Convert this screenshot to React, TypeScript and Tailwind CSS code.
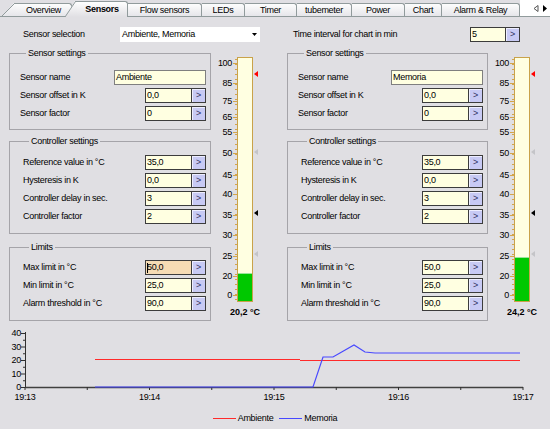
import React from "react";

// Ventana "Sensors" de la app de control: pestañas, dos sensores con termómetro y gráfico.

type TabDef = { label: string; w: string; slant?: boolean; active?: boolean };

const tabs: TabDef[] = [
  { label: "Overview", w: "w-[56px]", slant: true },
  { label: "Sensors", w: "w-[51px]", slant: true, active: true },
  { label: "Flow sensors", w: "w-[74px]" },
  { label: "LEDs", w: "w-[43px]" },
  { label: "Timer", w: "w-[52px]" },
  { label: "tubemeter", w: "w-[55px]" },
  { label: "Power", w: "w-[53px]" },
  { label: "Chart", w: "w-[37px]" },
  { label: "Alarm & Relay", w: "w-[78px]" },
];

function Tab({ label, w, slant, active }: TabDef) {
  const h = active ? 16 : 13;
  const sw = active ? 12 : 14;
  const id = `g-${label}`;
  return (
    <div className={`flex items-end ${active ? "z-10 -mb-px -ml-[7px] h-[16px]" : "h-[13px]"}`}>
      {slant && (
        <svg width={sw} height={h} className="block">
          <defs>
            <linearGradient id={id} x1="0" y1="0" x2="0" y2="1">
              <stop offset="0" stopColor={active ? "#ffffff" : "#fdfdfd"} />
              <stop offset="1" stopColor={active ? "#e0dfe3" : "#e6e6ea"} />
            </linearGradient>
          </defs>
          <polygon points={`0,${h} ${sw - 2},0 ${sw},0 ${sw},${h}`} fill={`url(#${id})`} />
          <line x1="0" y1={h} x2={sw - 1.5} y2="0.5" stroke="#919b9c" />
          <line x1={sw - 2} y1="0.5" x2={sw} y2="0.5" stroke="#919b9c" />
        </svg>
      )}
      <div
        className={`${w} flex h-full items-center justify-center rounded-tr-[3px] border-t border-r border-[#919b9c] ${
          active
            ? "bg-gradient-to-b from-white to-[#e0dfe3] font-bold"
            : "bg-gradient-to-b from-[#fdfdfd] to-[#e6e6ea]"
        }`}
      >
        {label}
      </div>
    </div>
  );
}

function ValueField({
  value,
  inputW = "w-[46px]",
  focused,
}: {
  value: string;
  inputW?: string;
  focused?: boolean;
}) {
  return (
    <div className="flex h-[15px]">
      <div
        className={`${inputW} flex items-center border border-r-0 border-[#3c3c3c] pl-[1px] ${
          focused ? "bg-[#f6dcb4]" : "bg-[#ffffe1]"
        }`}
      >
        {focused && <span className="mr-[-1px] h-[10px] w-px bg-black" />}
        {value}
      </div>
      <div className="flex w-[15px] items-center justify-center border border-[#3c3c3c] bg-[#c8caf4] text-[#303060] shadow-[inset_1px_1px_0_#eeeeff]">
        &gt;
      </div>
    </div>
  );
}

function Row({ label, children }: { label: string; children: React.ReactNode }) {
  return (
    <div className="flex h-[15px] items-center justify-between">
      <span>{label}</span>
      {children}
    </div>
  );
}

function Group({
  title,
  className,
  children,
}: {
  title: string;
  className: string;
  children: React.ReactNode;
}) {
  return (
    <fieldset className={`border border-[#a5a4a9] ${className}`}>
      <legend className="ml-[6px] px-[2px] leading-[12px]">{title}</legend>
      <div className="flex flex-col gap-[3px]">{children}</div>
    </fieldset>
  );
}

const scaleLabels: [string, number][] = [
  ["100", 6],
  ["85", 26],
  ["75", 44],
  ["65", 60],
  ["55", 75],
  ["50", 96],
  ["45", 118],
  ["40", 137],
  ["35", 158],
  ["30", 178],
  ["25", 199],
  ["20", 219],
  ["0", 238],
];

const minorTicks = Array.from({ length: 49 }, (_, i) => 2.5 + i * 5);

function Gauge({ fill, value }: { fill: number; value: string }) {
  return (
    <div className="ml-[3px] mt-[10px] flex">
      <svg width="23" height="245" className="block">
        {minorTicks.map((y) => (
          <line key={y} x1="21" x2="23" y1={y} y2={y} stroke="#d3a54a" />
        ))}
        {scaleLabels.map(([t, y]) => (
          <g key={t}>
            <line x1="19" x2="23" y1={y + 0.5} y2={y + 0.5} stroke="#d3a54a" />
            <text
              x="18"
              y={y}
              textAnchor="end"
              dominantBaseline="central"
              fontSize="9"
              fontFamily="Liberation Sans, Arial, sans-serif"
              fill="#000"
            >
              {t}
            </text>
          </g>
        ))}
      </svg>
      <div className="flex w-[16px] flex-col items-center">
        <div className="flex h-[245px] w-[16px] flex-col justify-end border border-[#c9a24a] bg-[#ffffe1]">
          <div className="border-t border-[#9ae69a] bg-[#00c800]" style={{ height: fill }} />
        </div>
        <div className="mt-[5px] whitespace-nowrap font-bold tracking-normal">{value}</div>
      </div>
      <svg width="8" height="245" className="block">
        <polygon points="1,17 5,14 5,20" fill="#ff0000" />
        <polygon points="1,95 5,92 5,98" fill="#c4c4c8" />
        <polygon points="1,156 5,153 5,159" fill="#000" />
        <polygon points="1,197 5,194 5,200" fill="#c4c4c8" />
      </svg>
    </div>
  );
}

function SensorColumn({
  name,
  fill,
  value,
  groupW,
  focusedMax,
}: {
  name: string;
  fill: number;
  value: string;
  groupW: string;
  focusedMax?: boolean;
}) {
  return (
    <div className="flex pl-[9px]">
      <div className={`flex ${groupW} flex-col`}>
        <Group title="Sensor settings" className="pb-[8px] pl-[10px] pr-[4px] pt-[11px]">
          <Row label="Sensor name">
            <div className="flex h-[15px] w-[92px] items-center border border-[#7f7f7f] bg-[#ffffe1] pl-[1px]">
              {name}
            </div>
          </Row>
          <Row label="Sensor offset in K">
            <ValueField value="0,0" />
          </Row>
          <Row label="Sensor factor">
            <ValueField value="0" />
          </Row>
        </Group>
        <Group title="Controller settings" className="mt-[5px] pb-[9px] pl-[13px] pr-[4px] pt-[8px]">
          <Row label="Reference value in °C">
            <ValueField value="35,0" />
          </Row>
          <Row label="Hysteresis in K">
            <ValueField value="0,0" />
          </Row>
          <Row label="Controller delay in sec.">
            <ValueField value="3" />
          </Row>
          <Row label="Controller factor">
            <ValueField value="2" />
          </Row>
        </Group>
        <Group title="Limits" className="mt-[7px] pb-[9px] pl-[13px] pr-[4px] pt-[7px]">
          <Row label="Max limit in °C">
            <ValueField value="50,0" focused={focusedMax} />
          </Row>
          <Row label="Min limit in °C">
            <ValueField value="25,0" />
          </Row>
          <Row label="Alarm threshold in °C">
            <ValueField value="90,0" />
          </Row>
        </Group>
      </div>
      <Gauge fill={fill} value={value} />
    </div>
  );
}

const xTicks = Array.from({ length: 9 }, (_, i) => 25 + i * 62.25);
const xLabels = ["19:13", "19:14", "19:15", "19:16", "19:17"];
const yVal = (v: number) => 387 - v * 1.35;

function Chart() {
  const font = "Liberation Sans, Arial, sans-serif";
  return (
    <svg width="550" height="80" viewBox="0 326 550 80" className="mt-[5px] block">
      <line x1="25.5" x2="25.5" y1="332" y2="388" stroke="#303030" />
      {[0, 10, 20, 30, 40].map((v) => (
        <g key={v}>
          <line x1="21" x2="25" y1={yVal(v) + 0.5} y2={yVal(v) + 0.5} stroke="#303030" />
          <text
            x="21"
            y={yVal(v)}
            textAnchor="end"
            dominantBaseline="central"
            fontSize="9"
            fontFamily={font}
          >
            {v}
          </text>
        </g>
      ))}
      {[5, 15, 25, 35].map((v) => (
        <line key={v} x1="23" x2="25" y1={yVal(v) + 0.5} y2={yVal(v) + 0.5} stroke="#303030" />
      ))}
      <line x1="25" x2="523" y1="387.5" y2="387.5" stroke="#404040" strokeWidth="1.5" />
      {xTicks.map((x) => (
        <line key={x} x1={x} x2={x} y1="387" y2="390" stroke="#303030" />
      ))}
      {xLabels.map((t, i) => (
        <text
          key={t}
          x={xTicks[i * 2]}
          y="397"
          textAnchor="middle"
          dominantBaseline="central"
          fontSize="9"
          fontFamily={font}
        >
          {t}
        </text>
      ))}
      <rect x="95" y="359" width="205" height="1" fill="#ff2a2a" />
      <rect x="300" y="360" width="220" height="1" fill="#ff2a2a" />
      <polyline
        points="95,387 313,387 323,357 333,357 354,345 365,352 375,353 390,353 520,353"
        fill="none"
        stroke="#4848ff"
        strokeWidth="1.2"
      />
    </svg>
  );
}

export default function App() {
  return (
    <div className="h-[429px] w-[550px] overflow-hidden bg-[#e0dfe3] font-['Liberation_Sans',Arial,sans-serif] text-[9px] leading-[11px] tracking-[-0.3px] text-black">
      {/* Pestañas */}
      <div className="flex h-[17px] items-end border-b border-[#919b9c] pl-[2px]">
        {tabs.map((t) => (
          <Tab key={t.label} {...t} />
        ))}
        <div className="flex h-full flex-1 items-center justify-end gap-[3px] bg-white pr-[2px]">
          <svg width="6" height="7">
            <polygon points="1,3.5 5,0.5 5,6.5" fill="#fff" stroke="#555" />
          </svg>
          <svg width="6" height="7">
            <polygon points="1,0 5,3.5 1,7" fill="#000" />
          </svg>
        </div>
      </div>

      {/* Selección de sensores */}
      <div className="mt-[10px] flex h-[15px] items-center">
        <span className="ml-[23px] w-[97px]">Sensor selection</span>
        <div className="flex h-[15px] w-[140px] items-center justify-between bg-white pl-[2px] pr-[3px]">
          <span>Ambiente, Memoria</span>
          <svg width="5" height="3">
            <polygon points="0,0 5,0 2.5,3" fill="#000" />
          </svg>
        </div>
        <span className="ml-[33px] w-[177px]">Time interval for chart in min</span>
        <ValueField value="5" inputW="w-[35px]" />
      </div>

      {/* Sensores */}
      <div className="mt-[5px] flex">
        <div className="w-[278px]">
          <SensorColumn name="Ambiente" fill={28} value="20,2 °C" groupW="w-[202px]" focusedMax />
        </div>
        <SensorColumn name="Memoria" fill={44} value="24,2 °C" groupW="w-[201px]" />
      </div>

      {/* Gráfico */}
      <Chart />
      <div className="mt-[6px] flex h-[12px] items-center justify-center gap-[6px]">
        <div className="flex items-center gap-[2px]">
          <span className="h-px w-[23px] bg-[#ff2a2a]" />
          <span>Ambiente</span>
        </div>
        <div className="flex items-center gap-[2px]">
          <span className="h-px w-[23px] bg-[#4848ff]" />
          <span>Memoria</span>
        </div>
      </div>
    </div>
  );
}
